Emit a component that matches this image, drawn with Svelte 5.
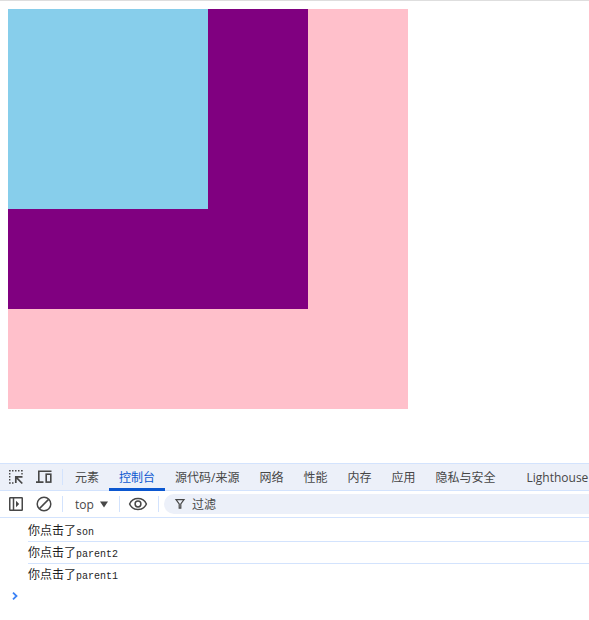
<script>
  const tabs = ['元素', '控制台', '源代码/来源', '网络', '性能', '内存', '应用', '隐私与安全', 'Lighthouse'];
  let active = $state('控制台');
  let logs = $state(['son', 'parent2', 'parent1']);
  let filter = $state('');

  function log(event, name) {
    if (event.detail > 0) logs.push(name);
  }
</script>

<div class="page">
  <main>
    <!-- svelte-ignore a11y_click_events_have_key_events, a11y_no_static_element_interactions -->
    <div class="parent1" onclick={(e) => log(e, 'parent1')}>
      <div class="parent2" onclick={(e) => log(e, 'parent2')}>
        <div class="son" onclick={(e) => log(e, 'son')}></div>
      </div>
    </div>
  </main>

  <section class="devtools">
    <nav class="tabbar">
      <div class="tools">
        <button class="icon" aria-label="选择元素">
          <svg width="16" height="16" viewBox="0 0 16 16" fill="none" stroke="#474747" stroke-width="1.4">
            <path d="M1 1.700h1.700M4 1.700h1.500M7 1.700h1.500M10 1.700h1.500M13 1.700h1.700M1.700 4v1.500M1.700 7v1.500M1.700 10v1.500M1 14h1.700M4 14h1.500M14 4v1.500" />
            <path d="M14.300 14.500L8.500 8.700M7.800 14V7.800H14.500" stroke-width="1.700" />
          </svg>
        </button>
        <button class="icon" aria-label="切换设备工具栏">
          <svg width="18" height="16" viewBox="0 0 18 16" fill="none" stroke="#474747" stroke-width="1.6">
            <path d="M16.5 2.2H3.8V12.5M1 13.1h7.5" />
            <rect x="11.2" y="5.2" width="4.6" height="7.9" />
          </svg>
        </button>
      </div>
      <i class="divider"></i>
      <div class="tabs">
        {#each tabs as tab}
          <button class="tab" class:active={tab === active} onclick={() => (active = tab)}>{tab}</button>
        {/each}
      </div>
    </nav>

    <div class="toolbar">
      <div class="tools">
        <button class="icon" aria-label="显示控制台边栏">
          <svg width="16" height="16" viewBox="0 0 16 16" fill="none" stroke="#474747" stroke-width="1.5">
            <rect x="1.75" y="1.75" width="12.5" height="12.5" rx=".5" />
            <path d="M5.5 2v12" />
            <path d="M8 4.8L11.2 8 8 11.2z" fill="#474747" stroke="none" />
          </svg>
        </button>
        <button class="icon" aria-label="清除控制台">
          <svg width="18" height="16" viewBox="0 0 18 16" fill="none" stroke="#474747" stroke-width="1.5">
            <circle cx="9" cy="8" r="6.8" />
            <path d="M13.6 3.4L4.4 12.6" />
          </svg>
        </button>
      </div>
      <i class="divider"></i>
      <div class="context">
        <select aria-label="JavaScript 上下文">
          <option>top</option>
        </select>
        <svg width="8" height="7" viewBox="0 0 8 7"><path d="M0 .5h8L4 6.5z" fill="#474747" /></svg>
      </div>
      <i class="divider"></i>
      <button class="icon eye" aria-label="创建实时表达式">
        <svg width="20" height="16" viewBox="0 0 20 16" fill="none" stroke="#474747" stroke-width="1.5">
          <path d="M1.6 8C3.2 4.4 6.3 2.5 10 2.5S16.8 4.4 18.4 8C16.8 11.6 13.7 13.5 10 13.5S3.2 11.6 1.6 8z" />
          <circle cx="10" cy="8" r="2.9" />
        </svg>
      </button>
      <i class="divider"></i>
      <label class="filter">
        <svg width="12" height="12" viewBox="0 0 12 12" fill="none" stroke="#474747" stroke-width="1.2">
          <path d="M2 1.700h8L6.800 6V10.200H5.200V6z" />
        </svg>
        <input type="text" placeholder="过滤" aria-label="过滤" bind:value={filter} />
      </label>
    </div>

    <ul class="messages">
      {#each logs.filter((name) => name.includes(filter)) as name}
        <li>你点击了<span>{name}</span></li>
      {/each}
    </ul>
    <div class="prompt">
      <svg width="6" height="8" viewBox="0 0 6 8" fill="none" stroke="#3b82f6" stroke-width="1.8"><path d="M1 .7L4.5 4 1 7.3" /></svg>
    </div>
  </section>
</div>

<style>
  :global(body) {
    margin: 0;
    background: #fff;
  }
  .page {
    overflow: hidden;
    border-top: 1px solid #dedede;
    font: 12px/16px 'Open Sans', 'Noto Sans CJK SC', sans-serif;
    color: #474747;
  }
  main {
    padding: 8px 8px 54px;
  }
  .parent1 {
    width: 400px;
    height: 400px;
    background: pink;
  }
  .parent2 {
    width: 300px;
    height: 300px;
    background: purple;
  }
  .son {
    width: 200px;
    height: 200px;
    background: skyblue;
  }
  button,
  select,
  input {
    margin: 0;
    padding: 0;
    border: 0;
    background: none;
    font: inherit;
    color: inherit;
  }
  svg {
    display: block;
    flex: none;
  }
  .tabbar,
  .toolbar {
    display: flex;
    align-items: center;
    height: 26px;
    border-bottom: 1px solid #d3e3fd;
  }
  .tabbar {
    border-top: 1px solid #d3e3fd;
    background: #ecf0f9;
  }
  .tools {
    display: flex;
    flex: none;
    gap: 11px;
    padding: 0 9px 0 8px;
  }
  .divider {
    flex: none;
    width: 1px;
    height: 16px;
    background: #d3e3fd;
  }
  .tabs {
    display: flex;
    align-self: stretch;
    padding-left: 2px;
  }
  .tab {
    flex: none;
    height: 27px;
    padding: 0 10px;
    white-space: nowrap;
  }
  .tab:last-child {
    margin-left: 11px;
  }
  .tab.active {
    background: linear-gradient(#0b57d0, #0b57d0) bottom / 100% 3px no-repeat;
    color: #0b57d0;
  }
  .context {
    display: flex;
    align-items: center;
    flex: none;
    gap: 5px;
    padding: 0 11px 0 12px;
  }
  .context select {
    appearance: none;
    width: 20px;
    padding-top: 1px;
  }
  .eye {
    padding: 0 10px 0 8px;
  }
  .filter {
    display: flex;
    align-items: center;
    flex: 1;
    gap: 6px;
    height: 20px;
    margin-left: 5px;
    padding-left: 10px;
    border-radius: 10px 0 0 10px;
    background: #ecf0f9;
  }
  .filter input {
    flex: 1;
    min-width: 0;
    padding-top: 2px;
    outline: none;
  }
  .filter input::placeholder {
    color: #474747;
    opacity: 1;
  }
  .messages {
    margin: 0;
    padding: 2px 0 0 28px;
    list-style: none;
    color: #1f1f1f;
  }
  .messages li {
    height: 21px;
    line-height: 21px;
  }
  .messages li + li {
    border-top: 1px solid #d3e3fd;
  }
  .messages span {
    font-family: 'Liberation Mono', monospace;
    font-size: 10px;
  }
  .prompt {
    padding: 7px 12px;
  }
</style>
